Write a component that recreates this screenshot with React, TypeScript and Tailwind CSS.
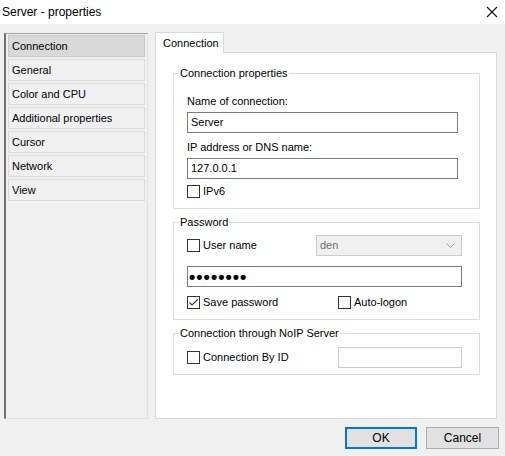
import React from "react";

const items = ["Connection", "General", "Color and CPU", "Additional properties", "Cursor", "Network", "View"];

function Box({ checked = false }: { checked?: boolean }) {
  return (
    <span className="w-[13px] h-[13px] border border-[#333333] bg-white flex items-center justify-center shrink-0">
      {checked && (
        <svg width="11" height="11" viewBox="0 0 11 11">
          <polyline points="1.5,5.5 4,8 9.5,2.5" fill="none" stroke="#333333" strokeWidth="1.1" />
        </svg>
      )}
    </span>
  );
}

function Check({ label, checked = false }: { label: string; checked?: boolean }) {
  return (
    <div className="flex items-center h-[15px] gap-[3px]">
      <Box checked={checked} />
      <span className="leading-[15px]">{label}</span>
    </div>
  );
}

function Group({ title, h, className = "", children }: { title: string; h: string; className?: string; children: React.ReactNode }) {
  return (
    <div className={`relative w-[307px] border border-[#dcdcdc] pl-[13px] ${h} ${className}`}>
      <span className="absolute -top-[8px] left-[5px] bg-white px-[1px] leading-[15px]">{title}</span>
      {children}
    </div>
  );
}

export default function App() {
  return (
    <div
      className="w-[505px] h-[456px] bg-[#f0f0f0] flex flex-col text-[11px] text-black"
      style={{ fontFamily: '"Liberation Sans", Arial, sans-serif' }}
    >
      <div className="h-[24px] bg-white flex items-center justify-between pl-[2px] pr-[7px]">
        <span className="text-[12px]">Server - properties</span>
        <svg width="12" height="12" viewBox="0 0 12 12">
          <path d="M1 1 L11 11 M11 1 L1 11" stroke="#111" strokeWidth="1.1" />
        </svg>
      </div>
      <div className="flex pl-[4px] pt-[8px] gap-[7px]">
        <div className="mt-[1px] w-[144px] h-[386px] border-l-2 border-l-[#707070] border-t border-t-[#a0a0a0] border-r border-r-[#e0e0e0] border-b border-b-[#e0e0e0] px-[2px] pt-[1px] flex flex-col gap-[2px]">
          {items.map((it, i) => (
            <div
              key={it}
              className={`h-[22px] border flex items-center pl-[3px] ${
                i === 0 ? "bg-[#d9d9d9] border-[#c9c9c9]" : "bg-[#f0f0f0] border-[#dadada]"
              }`}
            >
              {it}
            </div>
          ))}
        </div>
        <div className="w-[342px] flex flex-col">
          <div className="relative z-10 -mb-px w-[69px] h-[21px] bg-white border border-b-0 border-[#d9d9d9] pl-[7px] flex items-center">
            Connection
          </div>
          <div className="h-[367px] bg-white border border-[#d9d9d9] pl-[17px]">
            <Group title="Connection properties" h="h-[136px]" className="mt-[20px]">
              <div className="mt-[20px] leading-[15px]">Name of connection:</div>
              <div className="mt-[3px] w-[271px] h-[21px] border border-[#7a7a7a] flex items-center pl-[3px]">Server</div>
              <div className="mt-[7px] leading-[15px]">IP address or DNS name:</div>
              <div className="mt-[3px] w-[271px] h-[21px] border border-[#7a7a7a] flex items-center pl-[3px]">127.0.0.1</div>
              <div className="mt-[5px]">
                <Check label="IPv6" />
              </div>
            </Group>
            <Group title="Password" h="h-[98px]" className="mt-[13px]">
              <div className="mt-[12px] w-[275px] h-[21px] flex items-center">
                <Check label="User name" />
                <div className="ml-auto w-[146px] h-[21px] bg-[#f0f0f0] border border-[#cccccc] flex items-center justify-between pl-[3px] pr-[6px] text-[#6d6d6d]">
                  <span>den</span>
                  <svg width="9" height="6" viewBox="0 0 9 6">
                    <polyline points="0.5,0.5 4.5,4.5 8.5,0.5" fill="none" stroke="#a0a0a0" strokeWidth="1" />
                  </svg>
                </div>
              </div>
              <div className="mt-[10px] w-[275px] h-[21px] border border-[#7a7a7a] flex items-center pl-[1px]">
                <span className="text-[18px] leading-none tracking-[1px] font-bold">••••••••</span>
              </div>
              <div className="mt-[8px] flex">
                <div className="w-[151px]">
                  <Check label="Save password" checked />
                </div>
                <Check label="Auto-logon" />
              </div>
            </Group>
            <Group title="Connection through NoIP Server" h="h-[42px]" className="mt-[13px]">
              <div className="mt-[13px] flex items-center h-[21px]">
                <div className="w-[151px]">
                  <Check label="Connection By ID" />
                </div>
                <div className="w-[124px] h-[21px] border border-[#cccccc] bg-white" />
              </div>
            </Group>
          </div>
        </div>
      </div>
      <div className="mt-[8px] flex justify-end gap-[9px] pr-[6px] text-[12px]">
        <div className="w-[72px] h-[22px] bg-[#e1e1e1] border-2 border-[#0078d7] flex items-center justify-center">OK</div>
        <div className="w-[73px] h-[22px] bg-[#e1e1e1] border border-[#adadad] flex items-center justify-center">Cancel</div>
      </div>
    </div>
  );
}
